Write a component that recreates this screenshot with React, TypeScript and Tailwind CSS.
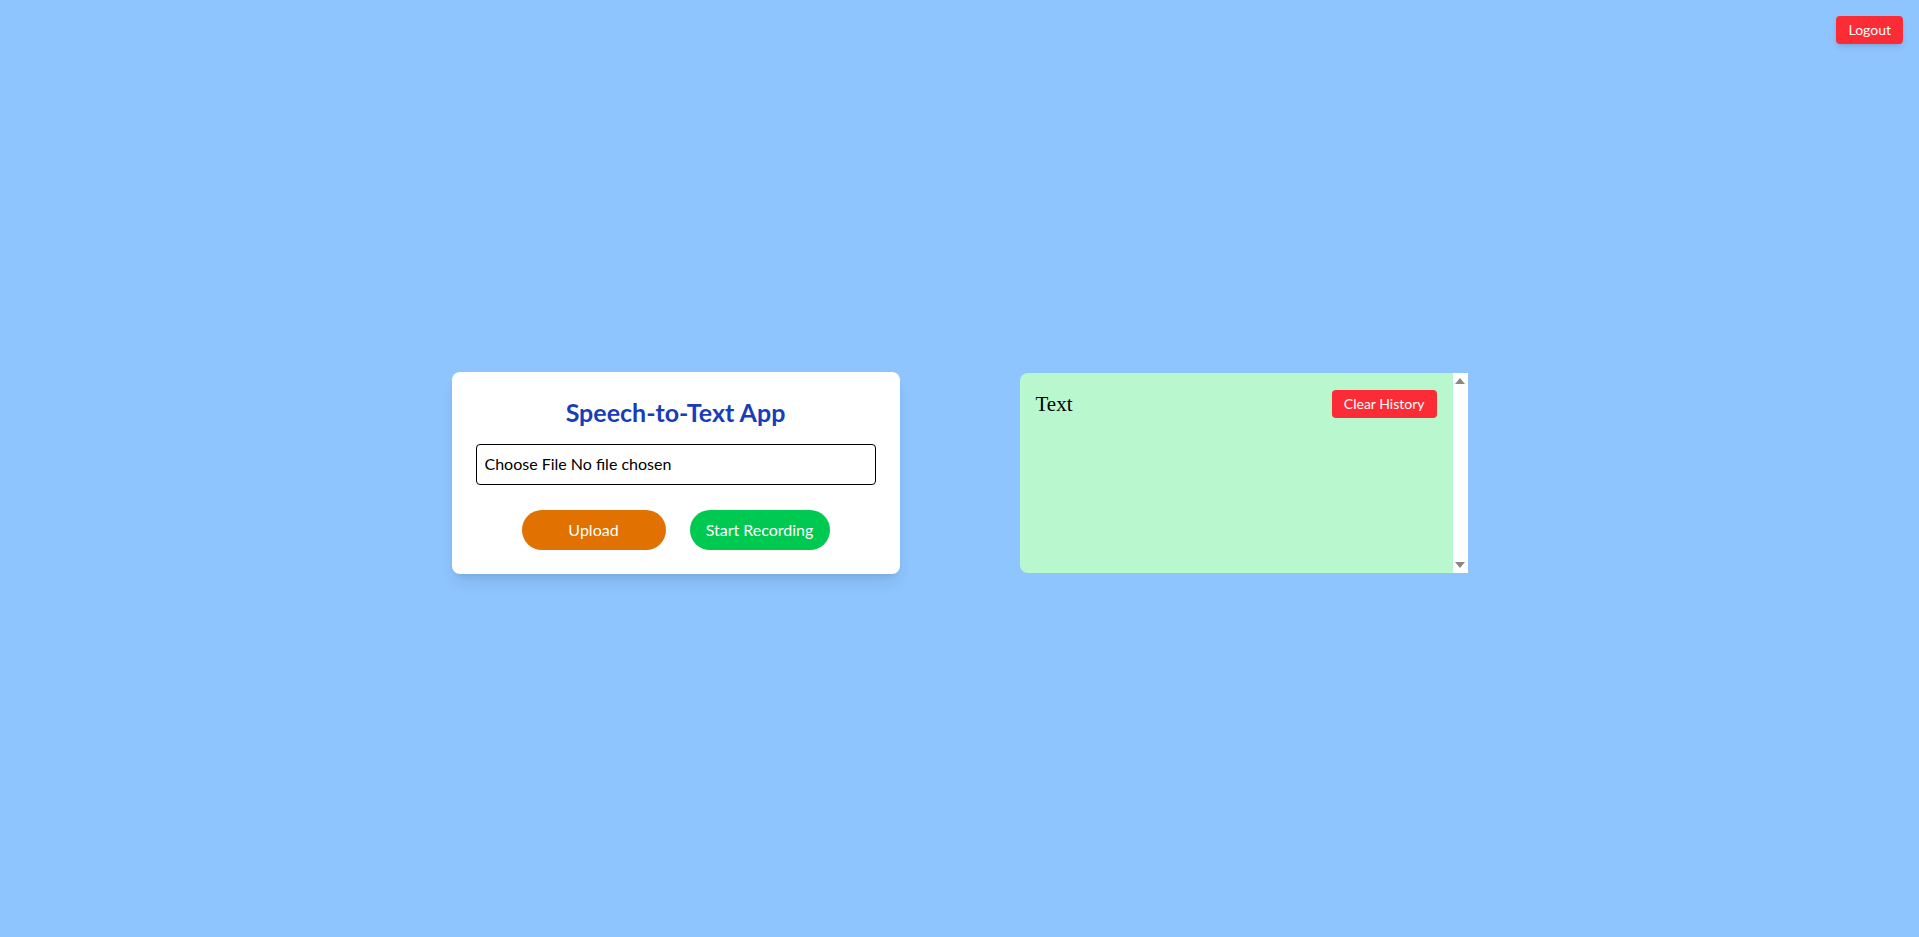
import { useState } from "react";

export default function App() {
  const [history, setHistory] = useState<string[]>([]);

  return (
    <main className="relative min-h-screen bg-blue-300 flex items-center justify-center gap-[120px] pt-2 font-['Lato','Liberation_Sans',sans-serif]">
      {/* Logout */}
      <button className="absolute top-4 right-4 bg-red-500 text-white text-sm px-3 py-1 rounded shadow-md">
        Logout
      </button>

      {/* Upload / record card */}
      <div className="w-[448px] bg-white rounded-lg shadow-lg p-6">
        <h1 className="text-[25px] leading-8 font-bold text-blue-800 text-center mb-4">
          Speech-to-Text App
        </h1>
        <input
          type="file"
          className="block w-full py-[7.5px] px-2 leading-6 border border-black rounded text-base text-black"
        />
        <div className="flex justify-center gap-6 mt-[25px]">
          <button className="w-36 py-2 rounded-full bg-amber-600 text-white">
            Upload
          </button>
          <button className="w-[140px] py-2 rounded-full bg-green-500 text-white">
            Start Recording
          </button>
        </div>
      </div>

      {/* History */}
      <div className="w-[448px] h-[200px] flex rounded-l-lg overflow-hidden">
        <div className="flex-1 bg-green-200 p-4 overflow-y-auto">
          <div className="flex items-center justify-between">
            <h2 className="text-[21px] text-black font-['Liberation_Serif',serif]">Text</h2>
            <button
              onClick={() => setHistory([])}
              className="bg-red-500 text-white text-sm px-3 py-1 rounded"
            >
              Clear History
            </button>
          </div>
          {history.map((h, i) => (
            <p key={i}>{h}</p>
          ))}
        </div>
        {/* scrollbar track */}
        <div className="w-[15px] bg-white flex flex-col items-center justify-between py-[5px]">
          <svg width="10" height="6" viewBox="0 0 10 6">
            <path d="M5 0L10 6H0z" fill="#888888" />
          </svg>
          <svg width="10" height="6" viewBox="0 0 10 6">
            <path d="M0 0h10L5 6z" fill="#888888" />
          </svg>
        </div>
      </div>
    </main>
  );
}
